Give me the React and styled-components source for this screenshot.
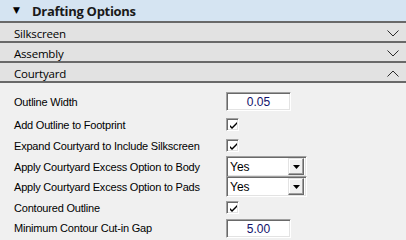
import styled, { createGlobalStyle } from "styled-components";

const GlobalStyle = createGlobalStyle`
  html, body {
    margin: 0;
    padding: 0;
    background: #f0f0f0;
  }
  * {
    box-sizing: border-box;
  }
`;

const sections = [
  { id: "silk", title: "Silkscreen", open: false },
  { id: "asm", title: "Assembly", open: false },
  { id: "court", title: "Courtyard", open: true },
];

const options = [
  { label: "Outline Width", type: "text", value: "0.05", height: 25 },
  { label: "Add Outline to Footprint", type: "check", height: 21 },
  { label: "Expand Courtyard to Include Silkscreen", type: "check", height: 21 },
  { label: "Apply Courtyard Excess Option to Body", type: "combo", value: "Yes", height: 20 },
  { label: "Apply Courtyard Excess Option to Pads", type: "combo", value: "Yes", height: 21 },
  { label: "Contoured Outline", type: "check", height: 21 },
  { label: "Minimum Contour Cut-in Gap", type: "text", value: "5.00", height: 20 },
];

function Chevron({ up }) {
  return (
    <svg width="12" height="7" viewBox="0 0 12 7">
      <polyline
        points={up ? "0.5,6.5 6,1 11.5,6.5" : "0.5,0.5 6,6 11.5,0.5"}
        fill="none"
        stroke="#2b2b2b"
        strokeWidth="1"
      />
    </svg>
  );
}

function Control({ option }) {
  if (option.type === "text") return <TextBox>{option.value}</TextBox>;
  if (option.type === "check")
    return (
      <CheckBox>
        <svg width="9" height="9" viewBox="0 0 9 9">
          <path d="M1 4 L3 6 L8 1 L8 3 L3 8 L1 6 Z" fill="#000" />
        </svg>
      </CheckBox>
    );
  return (
    <Combo>
      <ComboText>{option.value}</ComboText>
      <ComboButton>
        <svg width="7" height="4" viewBox="0 0 7 4">
          <path d="M0 0 H7 L3.5 4 Z" fill="#000" />
        </svg>
      </ComboButton>
    </Combo>
  );
}

export default function App() {
  return (
    <>
      <GlobalStyle />
      <Panel>
        <Header>
          <HeaderArrow>▼</HeaderArrow>
          <HeaderTitle>Drafting Options</HeaderTitle>
        </Header>
        {sections.map((s) => (
          <Section key={s.id}>
            <SectionTitle>{s.title}</SectionTitle>
            <Chevron up={s.open} />
          </Section>
        ))}
        <Content>
          {options.map((o) => (
            <Row key={o.label} $h={o.height}>
              <Label>{o.label}</Label>
              <Control option={o} />
            </Row>
          ))}
        </Content>
      </Panel>
    </>
  );
}

const Panel = styled.div`
  width: 406px;
  height: 240px;
  background: #f0f0f0;
  overflow: hidden;
`;

const Header = styled.div`
  height: 23px;
  background: #d5e4f2;
  border-bottom: 2px solid #696969;
  display: flex;
  align-items: center;
  padding-left: 13px;
`;

const HeaderArrow = styled.span`
  font-family: "DejaVu Sans", sans-serif;
  font-size: 9px;
  color: #000;
  width: 19px;
  margin-top: -1px;
`;

const HeaderTitle = styled.span`
  font-family: "Open Sans", sans-serif;
  font-weight: 700;
  font-size: 13px;
  color: #1a1a1a;
  letter-spacing: -0.3px;
`;

const Section = styled.div`
  height: 20px;
  background: #e2e2e2;
  border-bottom: 2px solid #696969;
  display: flex;
  align-items: center;
  justify-content: space-between;
  padding: 2px 7px 0 14px;
`;

const SectionTitle = styled.span`
  font-family: "Open Sans", sans-serif;
  font-size: 11.5px;
  font-weight: 500;
  color: #000;
  letter-spacing: -0.2px;
`;

const Content = styled.div`
  padding-top: 6px;
`;

const Row = styled.div`
  height: ${(p) => p.$h}px;
  display: grid;
  grid-template-columns: 212px auto;
  align-items: center;
  padding-left: 14px;
`;

const Label = styled.span`
  font-family: "Liberation Sans", Arial, sans-serif;
  font-size: 11px;
  color: #000;
  letter-spacing: -0.2px;
`;

const sunken = `
  border-top: 1px solid #a0a0a0;
  border-left: 1px solid #a0a0a0;
  border-right: 1px solid #ffffff;
  border-bottom: 1px solid #ffffff;
  box-shadow: inset 1px 1px 0 #696969, inset -1px -1px 0 #e3e3e3;
  background: #fff;
`;

const TextBox = styled.div`
  ${sunken}
  width: 65px;
  height: 19px;
  display: flex;
  align-items: center;
  justify-content: center;
  font-family: "Liberation Sans", Arial, sans-serif;
  font-size: 12px;
  color: #10106a;
  padding-top: 1px;
`;

const CheckBox = styled.div`
  ${sunken}
  width: 13px;
  height: 13px;
  display: flex;
  align-items: center;
  justify-content: center;
  padding: 1px 0 0 1px;
`;

const Combo = styled.div`
  ${sunken}
  width: 81px;
  height: 21px;
  display: flex;
  align-items: center;
  padding: 2px;
`;

const ComboText = styled.span`
  flex: 1;
  font-family: "Liberation Sans", Arial, sans-serif;
  font-size: 12px;
  color: #000;
  padding-left: 1px;
`;

const ComboButton = styled.div`
  width: 16px;
  height: 17px;
  background: #f0f0f0;
  border-top: 1px solid #e3e3e3;
  border-left: 1px solid #e3e3e3;
  border-right: 1px solid #696969;
  border-bottom: 1px solid #696969;
  box-shadow: inset -1px -1px 0 #a0a0a0, inset 1px 1px 0 #fff;
  display: flex;
  align-items: center;
  justify-content: center;
`;
